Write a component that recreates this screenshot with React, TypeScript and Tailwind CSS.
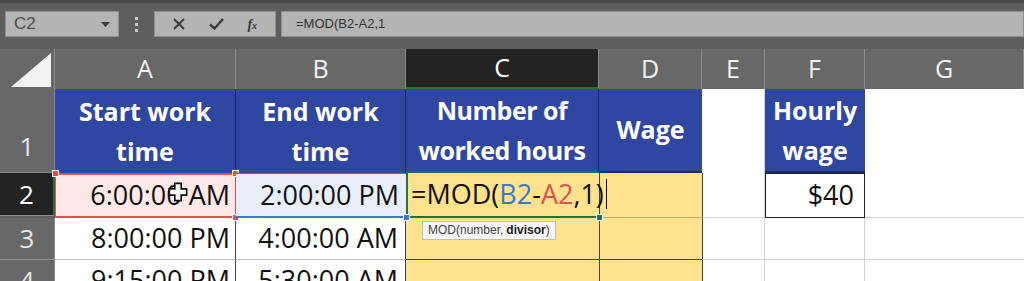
import React from 'react';

const font = { fontFamily: '"Open Sans", "Noto Sans", sans-serif' };

const cols = ['A', 'B', 'C', 'D', 'E', 'F', 'G'];

const ColHeader = ({ label, active }: { label: string; active?: boolean }) => (
    <div
        className={`flex items-center justify-center text-[25px] border-r border-[#8c8c8c] ${active ? 'bg-[#232323] border-b-2 border-b-[#217346] text-white' : 'bg-[#686868] text-[#f2f2f2]'}`}
    >
        {label}
    </div>
);

const RowHeader = ({ n, h, active }: { n: number; h: string; active?: boolean }) => (
    <div
        className={`${h} flex items-center justify-center text-[26px] border-b border-[#8c8c8c] ${active ? 'bg-[#232323] text-white border-r-2 border-r-[#217346]' : 'bg-[#686868] text-[#e8e8e8] border-r border-r-[#8c8c8c]'}`}
    >
        {n}
    </div>
);

const Handle = ({ color, pos }: { color: string; pos: string }) => (
    <span className={`absolute w-[7px] h-[7px] ${color} ${pos} border border-white`} />
);

export default function App() {
    return (
        <div className="w-[1024px] h-[281px] overflow-hidden bg-[#5e5e5e] select-none" style={font}>
            {/* Formula bar */}
            <div className="h-[3px] bg-[#4a4a4a]" />
            <div className="h-[46px] flex items-start pt-[8px] pl-[5px] gap-0">
                <div className="w-[114px] h-[26px] bg-[#b4b4b4] border border-[#8e8e8e] flex items-center justify-between pl-[8px] pr-[8px]">
                    <span className="text-[17px] text-[#4d4d4d]" style={{ fontFamily: '"Liberation Sans", sans-serif' }}>C2</span>
                    <svg width="9" height="5" viewBox="0 0 9 5"><path d="M0 0h9L4.5 5z" fill="#3c3c3c" /></svg>
                </div>
                <div className="w-[35px] h-[26px] flex flex-col items-center justify-center gap-[3px]">
                    <span className="w-[3px] h-[3px] bg-[#c8c8c8]" />
                    <span className="w-[3px] h-[3px] bg-[#c8c8c8]" />
                    <span className="w-[3px] h-[3px] bg-[#c8c8c8]" />
                </div>
                <div className="w-[122px] h-[26px] bg-[#b4b4b4] border border-[#8e8e8e] flex items-center justify-around px-[6px]">
                    <svg width="12" height="12" viewBox="0 0 12 12"><path d="M1 1l10 10M11 1L1 11" stroke="#3a3a3a" strokeWidth="1.8" /></svg>
                    <svg width="15" height="12" viewBox="0 0 15 12"><path d="M1 6.5l4.5 4L14 1" stroke="#3a3a3a" strokeWidth="2.4" fill="none" /></svg>
                    <span className="text-[14px] italic font-bold text-[#3a3a3a]" style={{ fontFamily: '"Liberation Serif", serif' }}>f<span className="text-[10px]">x</span></span>
                </div>
                <div className="ml-[5px] flex-1 h-[26px] bg-[#b4b4b4] border border-[#8e8e8e] flex items-center pl-[14px]">
                    <span className="text-[13px] text-[#333]" style={{ fontFamily: '"Liberation Sans Narrow", "Liberation Sans", sans-serif' }}>=MOD(B2-A2,1</span>
                </div>
            </div>

            {/* Grid */}
            <div className="relative grid grid-cols-[55px_181px_170px_193px_103px_63px_100px_159px]">
                {/* Column headers */}
                <div className="h-[40px] bg-[#686868] border-r border-[#8c8c8c] flex items-end justify-end pr-[1px] pb-[2px]">
                    <svg width="42" height="34" viewBox="0 0 42 34"><path d="M40 0V34H0z" fill="#f2f2f2" /></svg>
                </div>
                {cols.map(c => (
                    <ColHeader key={c} label={c} active={c === 'C'} />
                ))}

                {/* Row 1 */}
                <RowHeader n={1} h="h-[84px] items-end pb-[6px]" />
                <div className="bg-[#2f47a0] border-r border-[#1d2b63] flex items-center justify-center text-center text-white font-bold text-[25px] leading-[40px]">Start work<br />time</div>
                <div className="bg-[#2f47a0] border-r border-[#1d2b63] flex items-center justify-center text-center text-white font-bold text-[25px] leading-[40px]">End work<br />time</div>
                <div className="bg-[#2f47a0] border-r border-[#1d2b63] border-b-2 border-b-[#217346] flex items-center justify-center text-center text-white font-bold text-[25px] leading-[40px] tracking-[-0.5px]">Number of<br />worked hours</div>
                <div className="bg-[#2f47a0] border-b-2 border-b-[#1d2b63] flex items-center justify-center text-white font-bold text-[25px]">Wage</div>
                <div className="bg-white border-r border-[#d4d4d4]" />
                <div className="bg-[#2f47a0] border-b-2 border-b-[#1d2b63] flex items-center justify-center text-center text-white font-bold text-[25px] leading-[40px]">Hourly<br />wage</div>
                <div className="bg-white" />

                {/* Row 2 */}
                <RowHeader n={2} h="h-[43px]" active />
                <div className="relative bg-[#fce8e6] border-2 border-[#d9534f] border-l border-r flex items-center justify-end pr-[5px] text-[27px] text-[#111]">
                    6:00:00 AM
                    <Handle color="bg-[#d9534f]" pos="-left-[4px] -top-[5px]" />
                    <Handle color="bg-[#d9534f]" pos="-right-[4px] -top-[5px]" />
                    <Handle color="bg-[#d9534f]" pos="-right-[4px] -bottom-[5px]" />
                    <svg className="absolute left-[112px] top-[7px]" width="20" height="20" viewBox="0 0 22 22">
                        <path d="M7.5 1.5h7v6h6v7h-6v6h-7v-6h-6v-7h6z" fill="#fff" stroke="#111" strokeWidth="1.8" />
                    </svg>
                </div>
                <div className="relative bg-[#e8effb] border-b-2 border-b-[#3a78d4] border-t border-t-[#3a78d4] flex items-center justify-end pr-[7px] text-[27px] text-[#111]">
                    2:00:00 PM
                    <Handle color="bg-[#3a78d4]" pos="-right-[4px] -bottom-[5px]" />
                </div>
                <div className="relative bg-[#ffe28d] border-l-2 border-l-[#217346] border-b-2 border-b-[#217346] flex items-center pl-[3px] text-[27px] text-[#111] whitespace-nowrap z-10">
                    <span>=MOD(</span><span className="text-[#3a78d4]">B2</span><span>-</span><span className="text-[#d9534f]">A2</span><span>,1)</span>
                    <span className="ml-[2px] w-[1.5px] h-[30px] bg-[#111] shrink-0" />
                    <Handle color="bg-[#3a78d4]" pos="-left-[5px] -bottom-[5px]" />
                    <Handle color="bg-[#217346]" pos="-right-[4px] -bottom-[5px]" />
                </div>
                <div className="bg-[#ffe28d] border-l border-[#444] border-b border-b-[#bfae70]" />
                <div className="bg-white border-l border-[#444] border-r border-r-[#d4d4d4] border-b border-b-[#d4d4d4]" />
                <div className="bg-white border border-[#222] flex items-center justify-end pr-[10px] text-[27px] text-[#111]">$40</div>
                <div className="bg-white border-b border-[#d4d4d4]" />

                {/* Row 3 */}
                <RowHeader n={3} h="h-[42px]" />
                <div className="bg-white border-r border-[#444] border-b border-b-[#bdbdbd] flex items-center justify-end pr-[5px] text-[27px] text-[#111]">8:00:00 PM</div>
                <div className="bg-white border-r border-[#444] border-b border-b-[#bdbdbd] flex items-center justify-end pr-[7px] text-[27px] text-[#111]">4:00:00 AM</div>
                <div className="relative bg-[#ffe28d] border-b border-[#444]">
                    <div className="absolute left-[16px] top-[3px] px-[5px] h-[19px] flex items-center bg-[#f5f5f5] border border-[#bcbcbc] text-[12px] text-[#444]" style={{ fontFamily: '"Liberation Sans Narrow", "Liberation Sans", sans-serif' }}>
                        MOD(number, <b className="ml-[3px] text-[#222]">divisor</b>)
                    </div>
                </div>
                <div className="bg-[#ffe28d] border-l border-[#444] border-b border-b-[#444]" />
                <div className="bg-white border-l border-[#444] border-r border-r-[#d4d4d4] border-b border-b-[#d4d4d4]" />
                <div className="bg-white border-r border-[#d4d4d4] border-b border-b-[#d4d4d4]" />
                <div className="bg-white border-b border-[#d4d4d4]" />

                {/* Row 4 */}
                <RowHeader n={4} h="h-[42px]" />
                <div className="bg-white border-r border-[#444] flex items-center justify-end pr-[5px] text-[27px] text-[#111]">9:15:00 PM</div>
                <div className="bg-white border-r border-[#444] flex items-center justify-end pr-[7px] text-[27px] text-[#111]">5:30:00 AM</div>
                <div className="bg-[#ffe28d]" />
                <div className="bg-[#ffe28d] border-l border-[#444]" />
                <div className="bg-white border-l border-[#444] border-r border-r-[#d4d4d4]" />
                <div className="bg-white border-r border-[#d4d4d4]" />
                <div className="bg-white" />
            </div>
        </div>
    );
}
